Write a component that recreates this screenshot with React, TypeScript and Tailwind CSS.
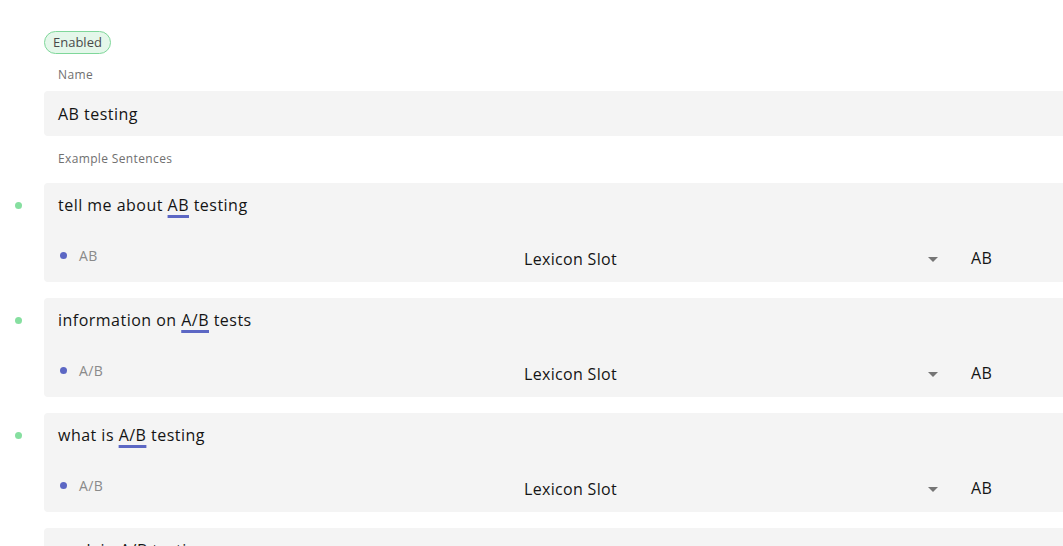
const sentences = [
    { before: 'tell me about ', slot: 'AB', after: ' testing', label: 'AB' },
    { before: 'information on ', slot: 'A/B', after: ' tests', label: 'A/B' },
    { before: 'what is ', slot: 'A/B', after: ' testing', label: 'A/B' },
    { before: 'explain ', slot: 'A/B', after: ' testing', label: 'A/B' },
];

const SentenceCard = ({ s }: { s: (typeof sentences)[number] }) => (
    <div className="flex">
        <div className="w-[44px] shrink-0 pl-[15px] pt-[19px]">
            <div className="w-[7px] h-[7px] rounded-full bg-[#86dfa0]" />
        </div>
        <div className="flex-1 bg-[#f4f4f4] rounded-[4px] px-[14px] pt-[12px] pb-[13px]">
            <div className="h-[20px] leading-[20px] text-[16px] tracking-[0.03em] text-[#141414] whitespace-pre">
                {s.before}
                <span className="underline decoration-[3px] decoration-[#5c67c4] underline-offset-[4px]">{s.slot}</span>
                {s.after}
            </div>
            <div className="mt-[30px] h-[24px] flex items-center">
                <div className="w-[452px] flex items-center gap-[12px] mb-[4px] pl-[2px]">
                    <span className="w-[7px] h-[7px] rounded-full bg-[#5c67c4]" />
                    <span className="text-[14px] tracking-[0.03em] text-[#8a8a8a]">{s.label}</span>
                </div>
                <div className="w-[436px] flex items-center justify-between pl-[14px] pr-[8px] mt-[4px]">
                    <span className="text-[16px] tracking-[0.02em] text-[#141414]">Lexicon Slot</span>
                    <span className="w-0 h-0 border-l-[5px] border-r-[5px] border-t-[5px] border-l-transparent border-r-transparent border-t-[#757575]" />
                </div>
                <span className="pl-[25px] text-[16px] tracking-[0.03em] text-[#141414] mt-[2px]">AB</span>
            </div>
        </div>
    </div>
);

export default function App() {
    return (
        <div className="w-[1063px] h-[546px] overflow-hidden bg-white font-['Open_Sans',sans-serif]">
            <div className="w-[1120px] pt-[31px]">
                <div className="pl-[44px] flex">
                    <span className="flex items-center h-[23px] px-[8px] rounded-full border border-[#7fd79a] bg-[#e4f7ea] text-[13px] text-[#4a4a4a]">
                        Enabled
                    </span>
                </div>
                <div className="pl-[58px] mt-[13px] h-[16px] leading-[16px] text-[12px] tracking-[0.03em] text-[#707070]">Name</div>
                <div className="ml-[44px] mt-[8px] h-[45px] rounded-[4px] bg-[#f4f4f4] flex items-center px-[14px] text-[16px] tracking-[0.03em] text-[#141414]">
                    AB testing
                </div>
                <div className="pl-[58px] mt-[15px] h-[16px] leading-[16px] text-[12px] tracking-[0.03em] text-[#707070]">Example Sentences</div>
                <div className="mt-[16px] flex flex-col gap-[16px]">
                    {sentences.map((s, i) => (
                        <SentenceCard key={i} s={s} />
                    ))}
                </div>
            </div>
        </div>
    );
}
